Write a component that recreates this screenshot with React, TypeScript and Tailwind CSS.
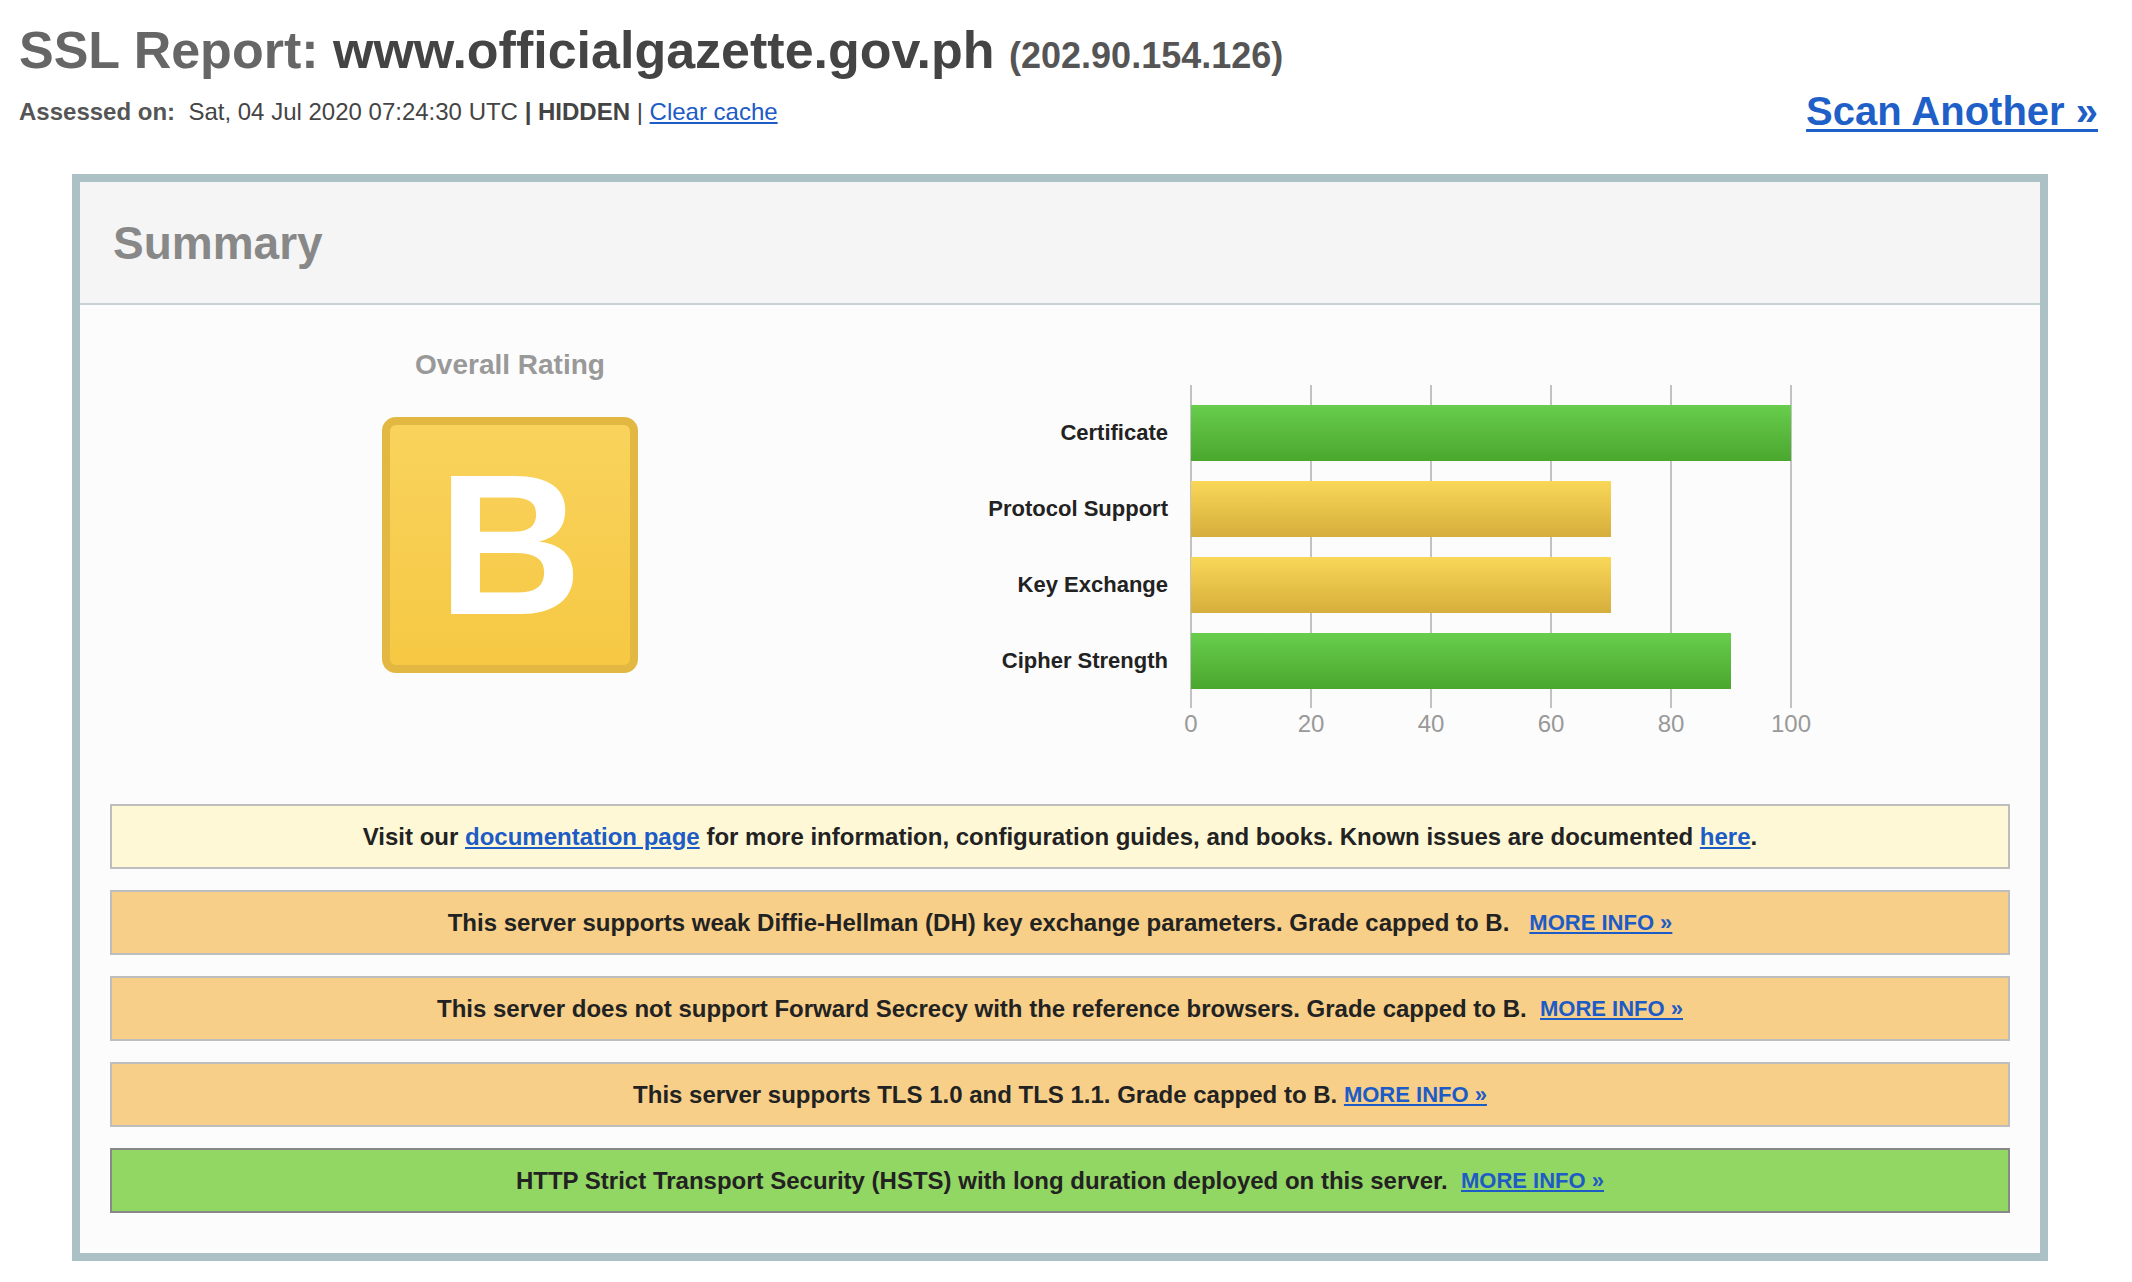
const bars = [
  { label: 'Certificate', value: 100, green: true },
  { label: 'Protocol Support', value: 70, green: false },
  { label: 'Key Exchange', value: 70, green: false },
  { label: 'Cipher Strength', value: 90, green: true },
];

const gridLines = ['left-[0px]', 'left-[120px]', 'left-[240px]', 'left-[360px]', 'left-[480px]', 'left-[600px]'];
const ticks = ['0', '20', '40', '60', '80', '100'];

function MoreInfo() {
  return <a href="#" className="text-[22px] text-[#1d5bc6] underline">MORE INFO »</a>;
}

function Notice({ tone, children }: { tone: 'info' | 'warn' | 'good'; children: React.ReactNode }) {
  const cls =
    tone === 'info'
      ? 'bg-[#fef8d6] border-[#bdbdbd]'
      : tone === 'warn'
        ? 'bg-[#f7cf88] border-[#bdbdbd]'
        : 'bg-[#92d663] border-[#888888]';
  return (
    <div className={`h-[65px] border-2 flex items-center justify-center text-[24px] font-bold text-[#222] leading-none whitespace-pre ${cls}`}>
      {children}
    </div>
  );
}

function Chart() {
  return (
    <div className="flex pt-[80px]">
      <div className="w-[258px] pt-[20px] flex flex-col gap-[20px]">
        {bars.map((b) => (
          <div key={b.label} className="h-[56px] flex items-center justify-end text-[22px] font-bold text-[#222] leading-none">
            {b.label}
          </div>
        ))}
      </div>
      <div className="ml-[22px]">
        <div className="relative w-[602px] h-[323px] pt-[20px] flex flex-col gap-[20px]">
          {gridLines.map((g) => (
            <div key={g} className={`absolute top-0 bottom-0 w-[2px] bg-[#c2c2c2] ${g}`} />
          ))}
          {bars.map((b) => (
            <div
              key={b.label}
              className={`relative ml-[1px] h-[56px] bg-linear-to-b ${
                b.green ? 'from-[#68cd4c] to-[#4aa72e]' : 'from-[#f9d858] to-[#d5ae3b]'
              }`}
              style={{ width: b.value * 6 }}
            />
          ))}
        </div>
        <div className="flex -ml-[59px] mt-[4px]">
          {ticks.map((t) => (
            <div key={t} className="w-[120px] text-center text-[24px] leading-none text-[#999]">
              {t}
            </div>
          ))}
        </div>
      </div>
    </div>
  );
}

export default function App() {
  return (
    <div className="min-h-screen bg-white font-['Liberation_Sans',Arial,sans-serif] pl-[19px] pr-[34px] pt-[24px]">
      <h1 className="text-[52px] font-bold leading-none text-[#444]">
        <span className="text-[#666]">SSL Report:</span> www.officialgazette.gov.ph{' '}
        <span className="text-[36px] text-[#555]">(202.90.154.126)</span>
      </h1>
      <div className="mt-[15px] flex justify-between items-start">
        <div className="mt-[9px] text-[24px] leading-none text-[#444] whitespace-pre">
          <b className="text-[#555]">Assessed on:</b>{'  '}Sat, 04 Jul 2020 07:24:30 UTC <b>| HIDDEN</b> |{' '}
          <a href="#" className="text-[#1d5bc6] underline">Clear cache</a>
        </div>
        <a href="#" className="text-[40px] font-bold leading-none text-[#1f5fc8] underline decoration-[3px] underline-offset-[4px]">
          Scan Another »
        </a>
      </div>

      <div className="mt-[43px] ml-[53px] mr-[50px] border-8 border-[#abc1c5]">
        <div className="h-[123px] bg-[#f5f5f5] border-b-2 border-[#c5d3d5] flex items-center pl-[33px]">
          <h2 className="text-[46px] font-bold text-[#888] leading-none">Summary</h2>
        </div>
        <div className="bg-[#fcfcfc] px-[30px] pb-[40px]">
          <div className="flex">
            <div className="w-[800px] flex flex-col items-center pt-[46px]">
              <div className="text-[28px] font-bold text-[#999] leading-none">Overall Rating</div>
              <div className="mt-[38px] w-[256px] h-[256px] rounded-[14px] border-8 border-[#e2b842] bg-linear-to-b from-[#f9d35c] to-[#f6c843] flex items-center justify-center">
                <span className="text-[200px] font-bold text-white leading-none">B</span>
              </div>
            </div>
            <Chart />
          </div>

          <div className="mt-[68px] flex flex-col gap-[21px]">
            <Notice tone="info">
              Visit our <a href="#" className="text-[#1d5bc6] underline">documentation page</a> for more information, configuration guides, and books. Known issues are documented{' '}
              <a href="#" className="text-[#1d5bc6] underline">here</a>.
            </Notice>
            <Notice tone="warn">
              {'This server supports weak Diffie-Hellman (DH) key exchange parameters. Grade capped to B.   '}
              <MoreInfo />
            </Notice>
            <Notice tone="warn">
              {'This server does not support Forward Secrecy with the reference browsers. Grade capped to B.  '}
              <MoreInfo />
            </Notice>
            <Notice tone="warn">
              {'This server supports TLS 1.0 and TLS 1.1. Grade capped to B. '}
              <MoreInfo />
            </Notice>
            <Notice tone="good">
              {'HTTP Strict Transport Security (HSTS) with long duration deployed on this server.  '}
              <MoreInfo />
            </Notice>
          </div>
        </div>
      </div>
    </div>
  );
}
